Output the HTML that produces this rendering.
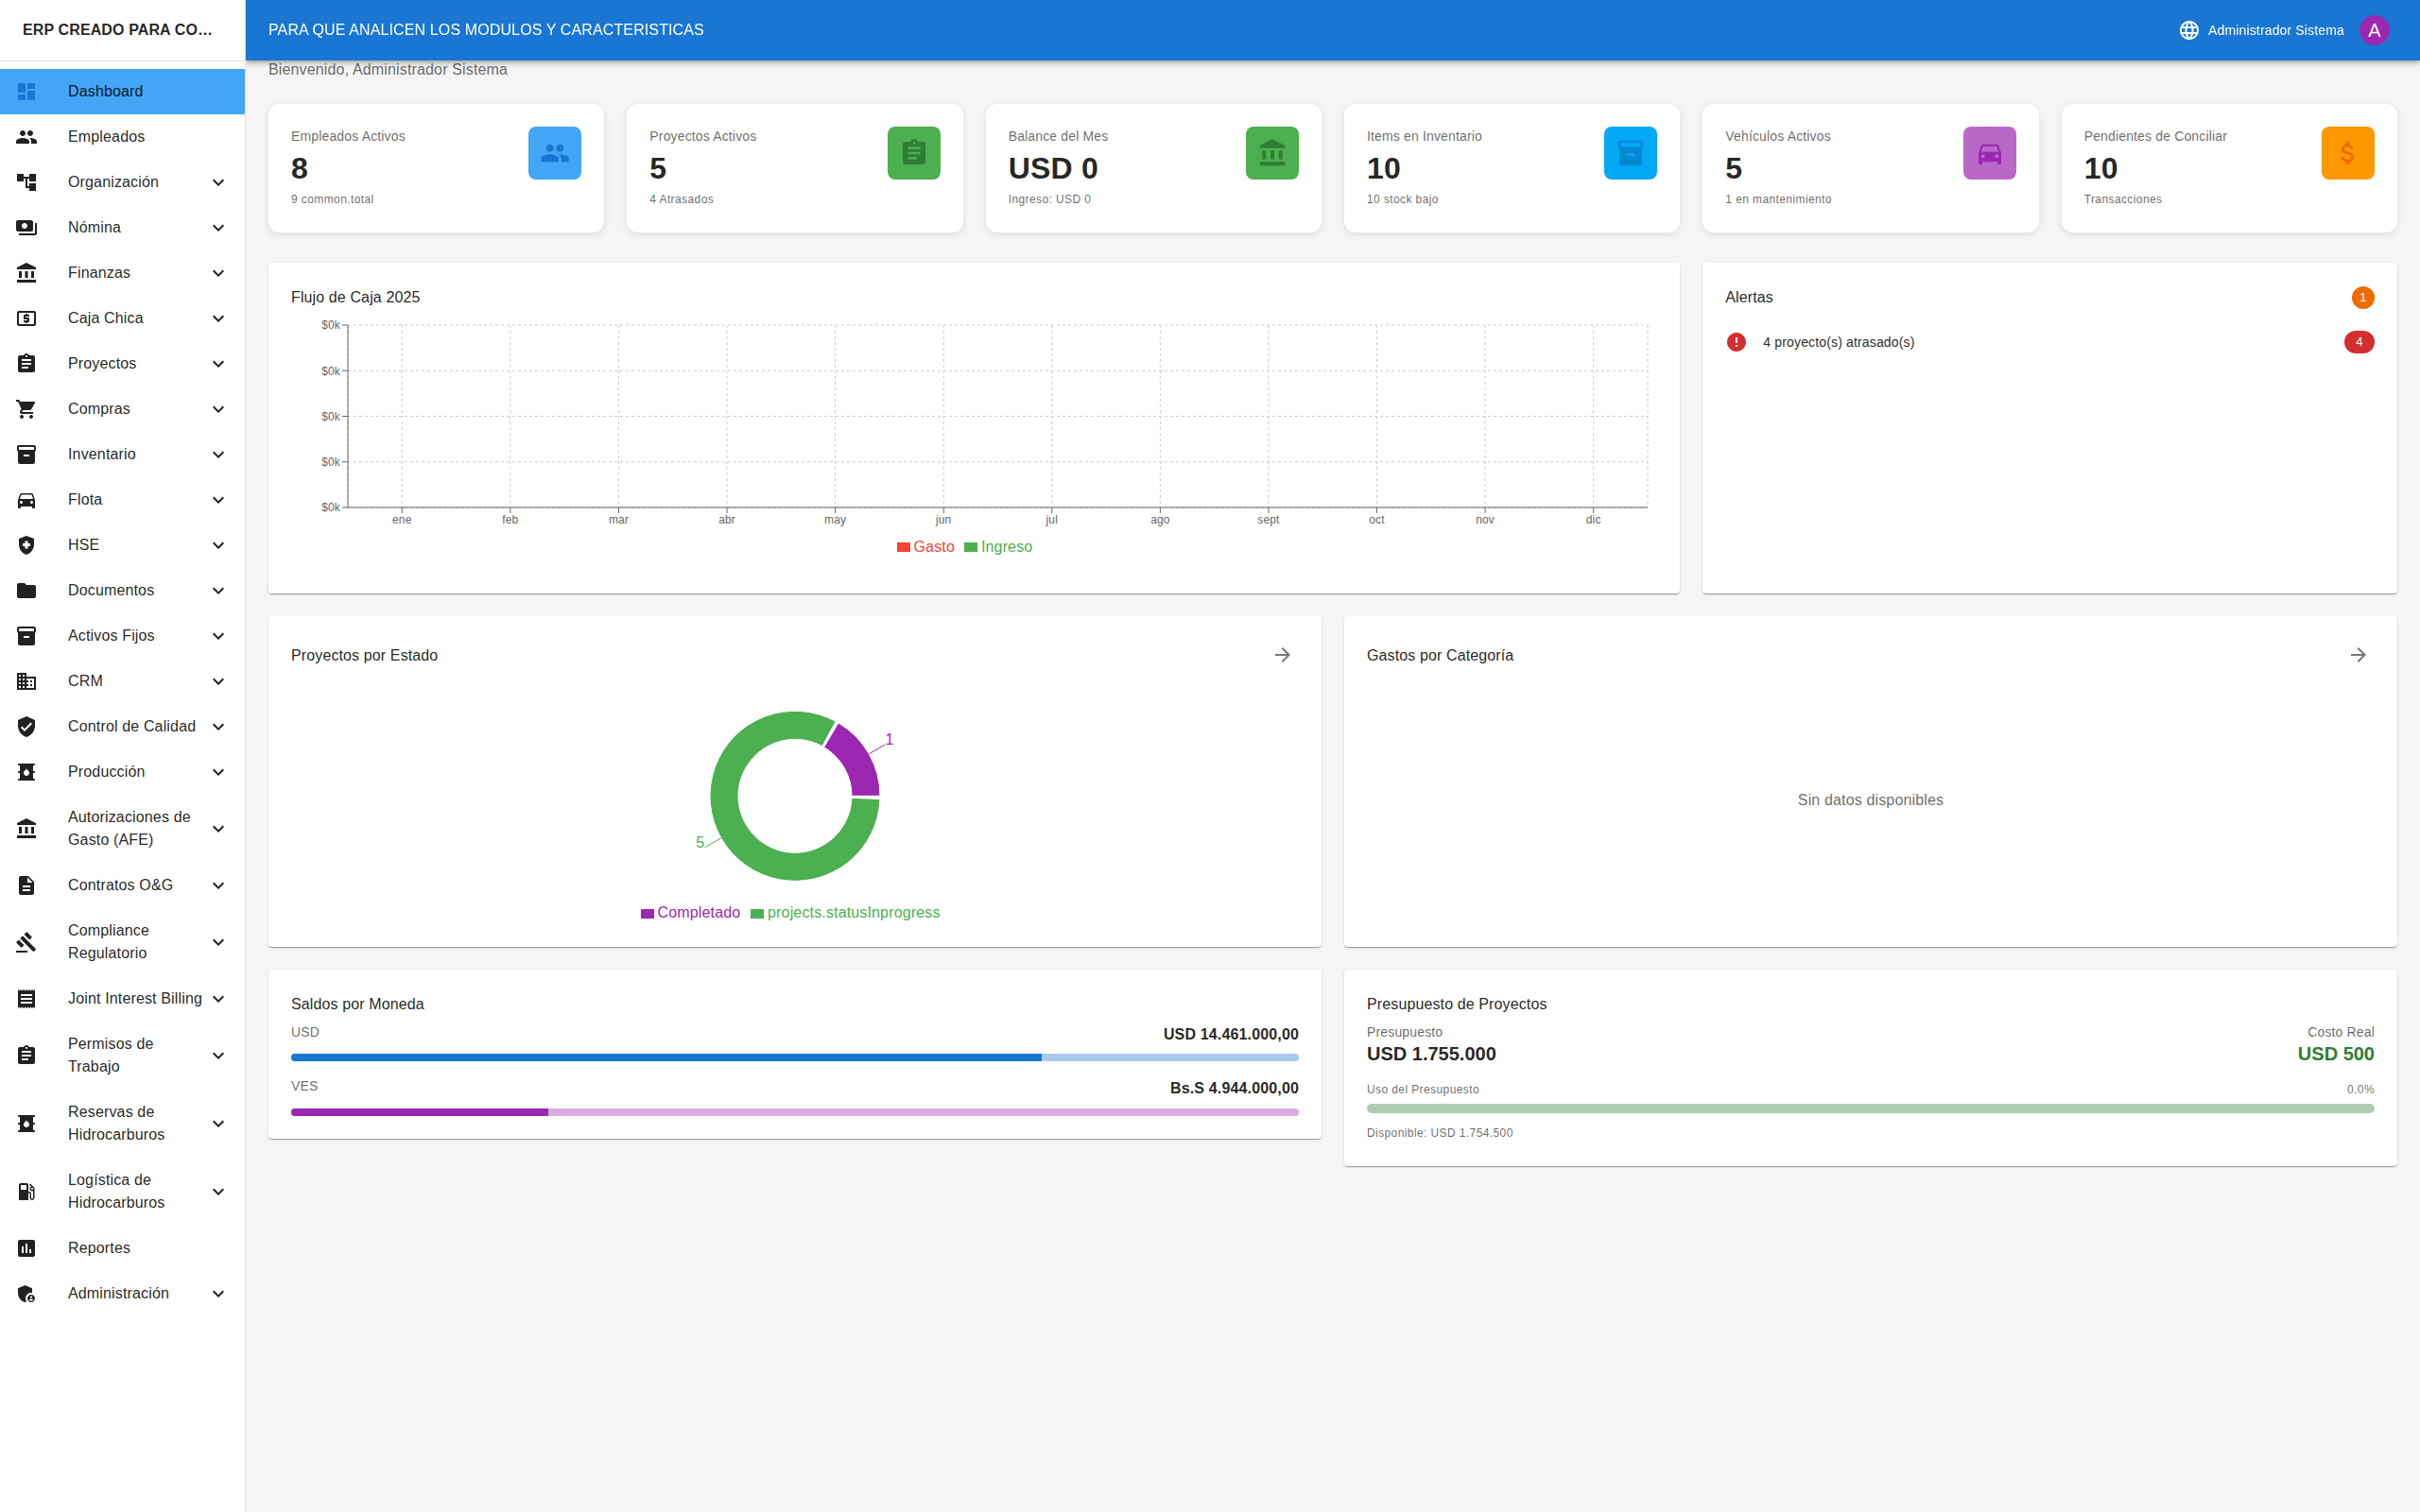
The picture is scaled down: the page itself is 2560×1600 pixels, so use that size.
<!DOCTYPE html>
<html lang="es">
<head>
<meta charset="utf-8">
<title>ERP Dashboard</title>
<style>
*{box-sizing:border-box}
html,body{margin:0;padding:0}
body{width:2560px;height:1600px;overflow:hidden;background:#f5f5f5;font-family:"Liberation Sans",sans-serif;color:rgba(0,0,0,.87);font-size:16px;line-height:1.5;letter-spacing:.00938em;-webkit-font-smoothing:antialiased}
svg{display:block}
/* sidebar */
#side{position:absolute;left:0;top:0;width:260px;height:1600px;background:#fff;border-right:1px solid rgba(0,0,0,.12);z-index:6}
#brand{height:64px;padding:0 24px;display:flex;align-items:center;font-weight:700;font-size:16px;letter-spacing:.0075em;white-space:nowrap}
#side hr{margin:0;border:0;border-top:1px solid rgba(0,0,0,.12)}
#nav{padding:8px 0;margin:0;list-style:none}
#nav li{display:flex;align-items:center;min-height:48px;padding:8px 16px;position:relative}
#nav li.two{min-height:72px}
#nav li.sel{background:#42a5f5}
#nav .ic{width:56px;flex:none;color:rgba(0,0,0,.87)}
#nav .ic svg{width:24px;height:24px;fill:currentColor}
#nav li.sel .ic{color:#1976d2}
#nav .tx{flex:1;font-size:16px;line-height:24px;letter-spacing:.00938em;color:rgba(0,0,0,.87)}
#nav .ch{width:24px;height:24px;flex:none;fill:rgba(0,0,0,.87)}
/* appbar */
#bar{will-change:transform;position:absolute;left:260px;top:0;width:2300px;height:64px;background:#1976d2;color:#fff;display:flex;align-items:center;padding:0 32px 0 24px;box-shadow:0 2px 4px -1px rgba(0,0,0,.2),0 4px 5px 0 rgba(0,0,0,.14),0 1px 10px 0 rgba(0,0,0,.12);z-index:5}
#bar .title{flex:1;font-size:16px;letter-spacing:.0075em;white-space:nowrap}
#bar .globe{width:24px;height:24px;fill:#fff;margin-right:8px}
#bar .user{font-size:14px;letter-spacing:.01071em;margin-right:16px}
#bar .av{width:32px;height:32px;border-radius:50%;background:#9c27b0;color:#fff;font-size:20px;display:flex;align-items:center;justify-content:center;letter-spacing:0}
/* main */
#main{position:absolute;left:0;top:0;width:2560px;height:1600px}
.abs{position:absolute}
.welcome{left:284px;top:62px;font-size:16px;line-height:24px;color:rgba(0,0,0,.6);white-space:nowrap}
/* stat cards */
.stat{position:absolute;top:110px;height:136px;background:#fff;border-radius:12px;box-shadow:0 2px 8px rgba(0,0,0,.1);padding:24px}
.st-l{font-size:14px;line-height:20px;letter-spacing:.01071em;color:rgba(0,0,0,.6);white-space:nowrap}
.st-v{font-size:32px;line-height:39.52px;font-weight:700;letter-spacing:.00735em;margin-top:5px;white-space:nowrap}
.st-c{font-size:12px;line-height:19.92px;letter-spacing:.03333em;color:rgba(0,0,0,.6);margin-top:3px;white-space:nowrap}
.st-i{position:absolute;right:24px;top:24px;width:56px;height:56px;border-radius:8px;display:flex;align-items:center;justify-content:center}
.st-i svg{fill:currentColor}
/* papers */
.paper{position:absolute;background:#fff;border-radius:4px;box-shadow:0 2px 1px -1px rgba(0,0,0,.2),0 1px 1px 0 rgba(0,0,0,.14),0 1px 3px 0 rgba(0,0,0,.12)}
.h6{position:absolute;left:24px;font-size:16px;line-height:25.6px;letter-spacing:.0075em;white-space:nowrap;color:rgba(0,0,0,.87)}
.arrow{position:absolute;right:29px;width:24px;height:24px;fill:rgba(0,0,0,.54)}
.chip{position:absolute;height:24px;border-radius:12px;color:#fff;font-size:13px;line-height:24px;text-align:center;letter-spacing:0}
.legend{position:absolute;display:flex;align-items:center;font-size:16px;line-height:24px;letter-spacing:.00938em;white-space:nowrap}
.legend i{display:inline-block;width:14px;height:10.5px;margin-right:3.5px}
.legend span{margin-right:10px}
.b2{font-size:14px;line-height:20px;letter-spacing:.01071em;color:rgba(0,0,0,.6);white-space:nowrap;position:absolute}
.cap{font-size:12px;line-height:19.92px;letter-spacing:.03333em;color:rgba(0,0,0,.6);white-space:nowrap;position:absolute}
.amt{font-size:16px;line-height:24px;font-weight:700;letter-spacing:.00938em;white-space:nowrap;position:absolute;right:24px}
.big{font-size:20px;line-height:32px;font-weight:700;letter-spacing:0;white-space:nowrap;position:absolute}
.prog{position:absolute;left:24px;right:24px;height:8px;border-radius:4px;overflow:hidden}
.prog b{display:block;height:100%}

</style>
</head>
<body>
<div id="side">
  <div id="brand">ERP CREADO PARA CO…</div>
  <hr>
  <ul id="nav">
<li class="sel"><span class="ic"><svg viewBox="0 0 24 24"><path d="M3 13h8V3H3v10zm0 8h8v-6H3v6zm10 0h8V11h-8v10zm0-18v6h8V3h-8z"/></svg></span><span class="tx">Dashboard</span></li>
<li><span class="ic"><svg viewBox="0 0 24 24"><path d="M16 11c1.66 0 2.99-1.34 2.99-3S17.66 5 16 5c-1.66 0-3 1.34-3 3s1.34 3 3 3zm-8 0c1.66 0 2.99-1.34 2.99-3S9.66 5 8 5C6.34 5 5 6.34 5 8s1.34 3 3 3zm0 2c-2.33 0-7 1.17-7 3.5V19h14v-2.5c0-2.33-4.67-3.5-7-3.5zm8 0c-.29 0-.62.02-.97.05 1.16.84 1.97 1.97 1.97 3.45V19h6v-2.5c0-2.33-4.67-3.5-7-3.5z"/></svg></span><span class="tx">Empleados</span></li>
<li><span class="ic"><svg viewBox="0 0 24 24"><path d="M22 11V3h-7v3H9V3H2v8h7V8h2v10h4v3h7v-8h-7v3h-2V8h2v3z"/></svg></span><span class="tx">Organización</span><svg class="ch" viewBox="0 0 24 24"><path d="M16.59 8.59L12 13.17 7.41 8.59 6 10l6 6 6-6z"/></svg></li>
<li><span class="ic"><svg viewBox="0 0 24 24"><path d="M19 14V6c0-1.1-.9-2-2-2H3c-1.1 0-2 .9-2 2v8c0 1.1.9 2 2 2h14c1.1 0 2-.9 2-2zm-9-1c-1.66 0-3-1.34-3-3s1.34-3 3-3 3 1.34 3 3-1.34 3-3 3zm13-6v11c0 1.1-.9 2-2 2H4v-2h17V7h2z"/></svg></span><span class="tx">Nómina</span><svg class="ch" viewBox="0 0 24 24"><path d="M16.59 8.59L12 13.17 7.41 8.59 6 10l6 6 6-6z"/></svg></li>
<li><span class="ic"><svg viewBox="0 0 24 24"><path d="M4 10h3v7H4zM10.5 10h3v7h-3zM2 19h20v3H2zM17 10h3v7h-3zM12 1L2 6v2h20V6z"/></svg></span><span class="tx">Finanzas</span><svg class="ch" viewBox="0 0 24 24"><path d="M16.59 8.59L12 13.17 7.41 8.59 6 10l6 6 6-6z"/></svg></li>
<li><span class="ic"><svg viewBox="0 0 24 24"><path d="M11 17h2v-1h1c.55 0 1-.45 1-1v-3c0-.55-.45-1-1-1h-3v-1h4V8h-2V7h-2v1h-1c-.55 0-1 .45-1 1v3c0 .55.45 1 1 1h3v1H9v2h2v1zm9-13H4c-1.11 0-1.99.89-1.99 2L2 18c0 1.11.89 2 2 2h16c1.11 0 2-.89 2-2V6c0-1.11-.89-2-2-2zm0 14H4V6h16v12z"/></svg></span><span class="tx">Caja Chica</span><svg class="ch" viewBox="0 0 24 24"><path d="M16.59 8.59L12 13.17 7.41 8.59 6 10l6 6 6-6z"/></svg></li>
<li><span class="ic"><svg viewBox="0 0 24 24"><path d="M19 3h-4.18C14.4 1.84 13.3 1 12 1c-1.3 0-2.4.84-2.82 2H5c-1.1 0-2 .9-2 2v14c0 1.1.9 2 2 2h14c1.1 0 2-.9 2-2V5c0-1.1-.9-2-2-2zm-7 0c.55 0 1 .45 1 1s-.45 1-1 1-1-.45-1-1 .45-1 1-1zm2 14H7v-2h7v2zm3-4H7v-2h10v2zm0-4H7V7h10v2z"/></svg></span><span class="tx">Proyectos</span><svg class="ch" viewBox="0 0 24 24"><path d="M16.59 8.59L12 13.17 7.41 8.59 6 10l6 6 6-6z"/></svg></li>
<li><span class="ic"><svg viewBox="0 0 24 24"><path d="M7 18c-1.1 0-1.99.9-1.99 2S5.9 22 7 22s2-.9 2-2-.9-2-2-2zM1 2v2h2l3.6 7.59-1.35 2.45c-.16.28-.25.61-.25.96 0 1.1.9 2 2 2h12v-2H7.42c-.14 0-.25-.11-.25-.25l.03-.12.9-1.63h7.45c.75 0 1.41-.41 1.75-1.03l3.58-6.49c.08-.14.12-.31.12-.48 0-.55-.45-1-1-1H5.21l-.94-2H1zm16 16c-1.1 0-1.99.9-1.99 2s.89 2 1.99 2 2-.9 2-2-.9-2-2-2z"/></svg></span><span class="tx">Compras</span><svg class="ch" viewBox="0 0 24 24"><path d="M16.59 8.59L12 13.17 7.41 8.59 6 10l6 6 6-6z"/></svg></li>
<li><span class="ic"><svg viewBox="0 0 24 24"><path d="M20 2H4c-1 0-2 .9-2 2v3.01c0 .72.43 1.34 1 1.69V20c0 1.1 1.1 2 2 2h14c.9 0 2-.9 2-2V8.7c.57-.35 1-.97 1-1.69V4c0-1.1-1-2-2-2zm-5 12H9v-2h6v2zm5-7H4V4h16v3z"/></svg></span><span class="tx">Inventario</span><svg class="ch" viewBox="0 0 24 24"><path d="M16.59 8.59L12 13.17 7.41 8.59 6 10l6 6 6-6z"/></svg></li>
<li><span class="ic"><svg viewBox="0 0 24 24"><path d="M18.92 6.01C18.72 5.42 18.16 5 17.5 5h-11c-.66 0-1.21.42-1.42 1.01L3 12v8c0 .55.45 1 1 1h1c.55 0 1-.45 1-1v-1h12v1c0 .55.45 1 1 1h1c.55 0 1-.45 1-1v-8l-2.08-5.99zM6.5 16c-.83 0-1.5-.67-1.5-1.5S5.67 13 6.5 13s1.5.67 1.5 1.5S7.33 16 6.5 16zm11 0c-.83 0-1.5-.67-1.5-1.5s.67-1.5 1.5-1.5 1.5.67 1.5 1.5-.67 1.5-1.5 1.5zM5 11l1.5-4.5h11L19 11H5z"/></svg></span><span class="tx">Flota</span><svg class="ch" viewBox="0 0 24 24"><path d="M16.59 8.59L12 13.17 7.41 8.59 6 10l6 6 6-6z"/></svg></li>
<li><span class="ic"><svg viewBox="0 0 24 24"><path d="M10.5 13H8v-3h2.5V7.5h3V10H16v3h-2.5v2.5h-3V13zM12 2 4 5v6.09c0 5.05 3.41 9.76 8 10.91 4.59-1.15 8-5.86 8-10.91V5l-8-3z"/></svg></span><span class="tx">HSE</span><svg class="ch" viewBox="0 0 24 24"><path d="M16.59 8.59L12 13.17 7.41 8.59 6 10l6 6 6-6z"/></svg></li>
<li><span class="ic"><svg viewBox="0 0 24 24"><path d="M10 4H4c-1.1 0-1.99.9-1.99 2L2 18c0 1.1.9 2 2 2h16c1.1 0 2-.9 2-2V8c0-1.1-.9-2-2-2h-8l-2-2z"/></svg></span><span class="tx">Documentos</span><svg class="ch" viewBox="0 0 24 24"><path d="M16.59 8.59L12 13.17 7.41 8.59 6 10l6 6 6-6z"/></svg></li>
<li><span class="ic"><svg viewBox="0 0 24 24"><path d="M20 2H4c-1 0-2 .9-2 2v3.01c0 .72.43 1.34 1 1.69V20c0 1.1 1.1 2 2 2h14c.9 0 2-.9 2-2V8.7c.57-.35 1-.97 1-1.69V4c0-1.1-1-2-2-2zm-5 12H9v-2h6v2zm5-7H4V4h16v3z"/></svg></span><span class="tx">Activos Fijos</span><svg class="ch" viewBox="0 0 24 24"><path d="M16.59 8.59L12 13.17 7.41 8.59 6 10l6 6 6-6z"/></svg></li>
<li><span class="ic"><svg viewBox="0 0 24 24"><path d="M12 7V3H2v18h20V7H12zM6 19H4v-2h2v2zm0-4H4v-2h2v2zm0-4H4V9h2v2zm0-4H4V5h2v2zm4 12H8v-2h2v2zm0-4H8v-2h2v2zm0-4H8V9h2v2zm0-4H8V5h2v2zm10 12h-8v-2h2v-2h-2v-2h2v-2h-2V9h8v10zm-2-8h-2v2h2v-2zm0 4h-2v2h2v-2z"/></svg></span><span class="tx">CRM</span><svg class="ch" viewBox="0 0 24 24"><path d="M16.59 8.59L12 13.17 7.41 8.59 6 10l6 6 6-6z"/></svg></li>
<li><span class="ic"><svg viewBox="0 0 24 24"><path d="M12 1L3 5v6c0 5.55 3.84 10.74 9 12 5.16-1.26 9-6.45 9-12V5l-9-4zm-2 16l-4-4 1.41-1.41L10 14.17l6.59-6.59L18 9l-8 8z"/></svg></span><span class="tx">Control de Calidad</span><svg class="ch" viewBox="0 0 24 24"><path d="M16.59 8.59L12 13.17 7.41 8.59 6 10l6 6 6-6z"/></svg></li>
<li><span class="ic"><svg viewBox="0 0 24 24"><path d="M20 13c.55 0 1-.45 1-1s-.45-1-1-1h-1V5h1c.55 0 1-.45 1-1s-.45-1-1-1H4c-.55 0-1 .45-1 1s.45 1 1 1h1v6H4c-.55 0-1 .45-1 1s.45 1 1 1h1v6H4c-.55 0-1 .45-1 1s.45 1 1 1h16c.55 0 1-.45 1-1s-.45-1-1-1h-1v-6h1zm-8 3c-1.66 0-3-1.32-3-2.95 0-1.3.52-1.67 3-4.55 2.47 2.86 3 3.24 3 4.55 0 1.63-1.34 2.95-3 2.95z"/></svg></span><span class="tx">Producción</span><svg class="ch" viewBox="0 0 24 24"><path d="M16.59 8.59L12 13.17 7.41 8.59 6 10l6 6 6-6z"/></svg></li>
<li class="two"><span class="ic"><svg viewBox="0 0 24 24"><path d="M4 10h3v7H4zM10.5 10h3v7h-3zM2 19h20v3H2zM17 10h3v7h-3zM12 1L2 6v2h20V6z"/></svg></span><span class="tx">Autorizaciones de<br>Gasto (AFE)</span><svg class="ch" viewBox="0 0 24 24"><path d="M16.59 8.59L12 13.17 7.41 8.59 6 10l6 6 6-6z"/></svg></li>
<li><span class="ic"><svg viewBox="0 0 24 24"><path d="M14 2H6c-1.1 0-1.99.9-1.99 2L4 20c0 1.1.89 2 1.99 2H18c1.1 0 2-.9 2-2V8l-6-6zm2 16H8v-2h8v2zm0-4H8v-2h8v2zm-3-5V3.5L18.5 9H13z"/></svg></span><span class="tx">Contratos O&amp;G</span><svg class="ch" viewBox="0 0 24 24"><path d="M16.59 8.59L12 13.17 7.41 8.59 6 10l6 6 6-6z"/></svg></li>
<li class="two"><span class="ic"><svg viewBox="0 0 24 24"><path d="M1 21h12v2H1zM5.245 8.07l2.83-2.827 14.14 14.142-2.828 2.827zM12.317 1l5.657 5.656-2.83 2.83-5.654-5.66zM3.825 9.485l5.657 5.657-2.828 2.828-5.657-5.657z"/></svg></span><span class="tx">Compliance<br>Regulatorio</span><svg class="ch" viewBox="0 0 24 24"><path d="M16.59 8.59L12 13.17 7.41 8.59 6 10l6 6 6-6z"/></svg></li>
<li><span class="ic"><svg viewBox="0 0 24 24"><path d="M18 17H6v-2h12v2zm0-4H6v-2h12v2zm0-4H6V7h12v2zM3 22l1.5-1.5L6 22l1.5-1.5L9 22l1.5-1.5L12 22l1.5-1.5L15 22l1.5-1.5L18 22l1.5-1.5L21 22V2l-1.5 1.5L18 2l-1.5 1.5L15 2l-1.5 1.5L12 2l-1.5 1.5L9 2 7.5 3.5 6 2 4.5 3.5 3 2v20z"/></svg></span><span class="tx">Joint Interest Billing</span><svg class="ch" viewBox="0 0 24 24"><path d="M16.59 8.59L12 13.17 7.41 8.59 6 10l6 6 6-6z"/></svg></li>
<li class="two"><span class="ic"><svg viewBox="0 0 24 24"><path d="M19 3h-4.18C14.4 1.84 13.3 1 12 1c-1.3 0-2.4.84-2.82 2H5c-1.1 0-2 .9-2 2v14c0 1.1.9 2 2 2h14c1.1 0 2-.9 2-2V5c0-1.1-.9-2-2-2zm-7 0c.55 0 1 .45 1 1s-.45 1-1 1-1-.45-1-1 .45-1 1-1zm2 14H7v-2h7v2zm3-4H7v-2h10v2zm0-4H7V7h10v2z"/></svg></span><span class="tx">Permisos de<br>Trabajo</span><svg class="ch" viewBox="0 0 24 24"><path d="M16.59 8.59L12 13.17 7.41 8.59 6 10l6 6 6-6z"/></svg></li>
<li class="two"><span class="ic"><svg viewBox="0 0 24 24"><path d="M20 13c.55 0 1-.45 1-1s-.45-1-1-1h-1V5h1c.55 0 1-.45 1-1s-.45-1-1-1H4c-.55 0-1 .45-1 1s.45 1 1 1h1v6H4c-.55 0-1 .45-1 1s.45 1 1 1h1v6H4c-.55 0-1 .45-1 1s.45 1 1 1h16c.55 0 1-.45 1-1s-.45-1-1-1h-1v-6h1zm-8 3c-1.66 0-3-1.32-3-2.95 0-1.3.52-1.67 3-4.55 2.47 2.86 3 3.24 3 4.55 0 1.63-1.34 2.95-3 2.95z"/></svg></span><span class="tx">Reservas de<br>Hidrocarburos</span><svg class="ch" viewBox="0 0 24 24"><path d="M16.59 8.59L12 13.17 7.41 8.59 6 10l6 6 6-6z"/></svg></li>
<li class="two"><span class="ic"><svg viewBox="0 0 24 24"><path d="M19.77 7.23l.01-.01-3.72-3.72L15 4.56l2.11 2.11c-.94.36-1.61 1.26-1.61 2.33 0 1.38 1.12 2.5 2.5 2.5.36 0 .69-.08 1-.21v7.21c0 .55-.45 1-1 1s-1-.45-1-1V14c0-1.1-.9-2-2-2h-1V5c0-1.1-.9-2-2-2H6c-1.1 0-2 .9-2 2v16h10v-7.5h1.5v5c0 1.38 1.12 2.5 2.5 2.5s2.5-1.12 2.5-2.5V9c0-.69-.28-1.32-.73-1.77zM12 10H6V5h6v5zm6 0c-.55 0-1-.45-1-1s.45-1 1-1 1 .45 1 1-.45 1-1 1z"/></svg></span><span class="tx">Logística de<br>Hidrocarburos</span><svg class="ch" viewBox="0 0 24 24"><path d="M16.59 8.59L12 13.17 7.41 8.59 6 10l6 6 6-6z"/></svg></li>
<li><span class="ic"><svg viewBox="0 0 24 24"><path d="M19 3H5c-1.1 0-2 .9-2 2v14c0 1.1.9 2 2 2h14c1.1 0 2-.9 2-2V5c0-1.1-.9-2-2-2zM9 17H7v-7h2v7zm4 0h-2V7h2v10zm4 0h-2v-4h2v4z"/></svg></span><span class="tx">Reportes</span></li>
<li><span class="ic"><svg viewBox="0 0 24 24"><path d="M17 11c.34 0 .67.04 1 .09V6.27L10.5 3 3 6.27v4.91c0 4.54 3.2 8.79 7.5 9.82.55-.13 1.08-.32 1.6-.55-.69-.98-1.1-2.17-1.1-3.45 0-3.31 2.69-6 6-6zM17 13c-2.21 0-4 1.79-4 4s1.79 4 4 4 4-1.79 4-4-1.79-4-4-4zm0 1.38c.62 0 1.12.51 1.12 1.12s-.51 1.120-1.12 1.120-1.120-.51-1.120-1.120.5-1.120 1.120-1.120zm0 5.370c-.93 0-1.740-.46-2.240-1.170.05-.72 1.510-1.080 2.240-1.080s2.190.36 2.240 1.080c-.5.71-1.310 1.170-2.240 1.170z"/></svg></span><span class="tx">Administración</span><svg class="ch" viewBox="0 0 24 24"><path d="M16.59 8.59L12 13.17 7.41 8.59 6 10l6 6 6-6z"/></svg></li>
</ul>
</div>
<div id="bar">
  <div class="title">PARA QUE ANALICEN LOS MODULOS Y CARACTERISTICAS</div>
  <svg class="globe" viewBox="0 0 24 24"><path d="M11.99 2C6.47 2 2 6.48 2 12s4.47 10 9.99 10C17.52 22 22 17.52 22 12S17.52 2 11.99 2zm6.93 6h-2.95c-.32-1.25-.78-2.45-1.38-3.56 1.840.63 3.370 1.910 4.330 3.560zM12 4.040c.83 1.200 1.480 2.530 1.910 3.960h-3.820c.43-1.430 1.080-2.760 1.910-3.960zM4.260 14C4.100 13.360 4 12.690 4 12s.1-1.360.26-2h3.380c-.08.66-.14 1.320-.14 2 0 .68.06 1.340.14 2H4.260zm.82 2h2.950c.32 1.250.78 2.450 1.380 3.560-1.840-.63-3.370-1.900-4.330-3.560zm2.950-8H5.080c.96-1.660 2.490-2.930 4.330-3.560C8.810 5.550 8.350 6.750 8.030 8zM12 19.960c-.83-1.200-1.480-2.530-1.910-3.960h3.820c-.43 1.430-1.080 2.760-1.910 3.960zM14.340 14H9.660c-.09-.66-.16-1.320-.16-2 0-.68.07-1.350.16-2h4.680c.09.65.16 1.320.16 2 0 .68-.07 1.340-.16 2zm.25 5.560c.6-1.110 1.060-2.310 1.380-3.560h2.950c-.96 1.650-2.490 2.930-4.330 3.560zM16.360 14c.08-.66.14-1.320.14-2 0-.68-.06-1.340-.14-2h3.380c.16.64.26 1.310.26 2s-.1 1.360-.26 2h-3.380z"/></svg>
  <div class="user">Administrador Sistema</div>
  <div class="av">A</div>
</div>
<div id="main">
<div class="abs welcome">Bienvenido, Administrador Sistema</div>
<div class="stat" style="left:284.00px;width:355.33px">
  <div class="st-l">Empleados Activos</div><div class="st-v">8</div><div class="st-c">9 common.total</div>
  <div class="st-i" style="background:#42a5f5;color:#1976d2"><svg width="32" height="32" viewBox="0 0 24 24"><path d="M16 11c1.66 0 2.99-1.34 2.99-3S17.66 5 16 5c-1.66 0-3 1.34-3 3s1.34 3 3 3zm-8 0c1.66 0 2.99-1.34 2.99-3S9.66 5 8 5C6.34 5 5 6.34 5 8s1.34 3 3 3zm0 2c-2.33 0-7 1.17-7 3.5V19h14v-2.5c0-2.33-4.67-3.5-7-3.5zm8 0c-.29 0-.62.02-.97.05 1.16.84 1.97 1.97 1.97 3.45V19h6v-2.5c0-2.33-4.67-3.5-7-3.5z"/></svg></div>
</div>
<div class="stat" style="left:663.33px;width:355.33px">
  <div class="st-l">Proyectos Activos</div><div class="st-v">5</div><div class="st-c">4 Atrasados</div>
  <div class="st-i" style="background:#4caf50;color:#2e7d32"><svg width="32" height="32" viewBox="0 0 24 24"><path d="M19 3h-4.18C14.4 1.84 13.3 1 12 1c-1.3 0-2.4.84-2.82 2H5c-1.1 0-2 .9-2 2v14c0 1.1.9 2 2 2h14c1.1 0 2-.9 2-2V5c0-1.1-.9-2-2-2zm-7 0c.55 0 1 .45 1 1s-.45 1-1 1-1-.45-1-1 .45-1 1-1zm2 14H7v-2h7v2zm3-4H7v-2h10v2zm0-4H7V7h10v2z"/></svg></div>
</div>
<div class="stat" style="left:1042.67px;width:355.33px">
  <div class="st-l">Balance del Mes</div><div class="st-v">USD 0</div><div class="st-c">Ingreso: USD 0</div>
  <div class="st-i" style="background:#4caf50;color:#2e7d32"><svg width="32" height="32" viewBox="0 0 24 24"><path d="M4 10h3v7H4zM10.5 10h3v7h-3zM2 19h20v3H2zM17 10h3v7h-3zM12 1L2 6v2h20V6z"/></svg></div>
</div>
<div class="stat" style="left:1422.00px;width:355.33px">
  <div class="st-l">Items en Inventario</div><div class="st-v">10</div><div class="st-c">10 stock bajo</div>
  <div class="st-i" style="background:#03a9f4;color:#0288d1"><svg width="32" height="32" viewBox="0 0 24 24"><path d="M20 2H4c-1 0-2 .9-2 2v3.01c0 .72.43 1.34 1 1.69V20c0 1.1 1.1 2 2 2h14c.9 0 2-.9 2-2V8.7c.57-.35 1-.97 1-1.69V4c0-1.1-1-2-2-2zm-5 12H9v-2h6v2zm5-7H4V4h16v3z"/></svg></div>
</div>
<div class="stat" style="left:1801.33px;width:355.33px">
  <div class="st-l">Vehículos Activos</div><div class="st-v">5</div><div class="st-c">1 en mantenimiento</div>
  <div class="st-i" style="background:#ba68c8;color:#9c27b0"><svg width="32" height="32" viewBox="0 0 24 24"><path d="M18.92 6.01C18.72 5.42 18.16 5 17.5 5h-11c-.66 0-1.21.42-1.42 1.01L3 12v8c0 .55.45 1 1 1h1c.55 0 1-.45 1-1v-1h12v1c0 .55.45 1 1 1h1c.55 0 1-.45 1-1v-8l-2.08-5.99zM6.5 16c-.83 0-1.5-.67-1.5-1.5S5.67 13 6.5 13s1.5.67 1.5 1.5S7.33 16 6.5 16zm11 0c-.83 0-1.5-.67-1.5-1.5s.67-1.5 1.5-1.5 1.5.67 1.5 1.5-.67 1.5-1.5 1.5zM5 11l1.5-4.5h11L19 11H5z"/></svg></div>
</div>
<div class="stat" style="left:2180.67px;width:355.33px">
  <div class="st-l">Pendientes de Conciliar</div><div class="st-v">10</div><div class="st-c">Transacciones</div>
  <div class="st-i" style="background:#ff9800;color:#ed6c02"><svg width="32" height="32" viewBox="0 0 24 24"><path d="M11.8 10.9c-2.27-.59-3-1.2-3-2.15 0-1.09 1.01-1.85 2.7-1.85 1.78 0 2.44.85 2.5 2.1h2.210c-.07-1.720-1.120-3.300-3.210-3.810V3h-3v2.160c-1.940.42-3.500 1.680-3.500 3.610 0 2.310 1.910 3.460 4.700 4.130 2.500.6 3 1.480 3 2.410 0 .69-.49 1.790-2.700 1.790-2.060 0-2.870-.92-2.980-2.100h-2.200c.12 2.190 1.760 3.420 3.680 3.830V21h3v-2.150c1.950-.37 3.500-1.500 3.500-3.550 0-2.840-2.430-3.810-4.700-4.400z"/></svg></div>
</div>

<!-- cash flow -->
<div class="paper" style="left:284px;top:278px;width:1493.33px;height:350px">
  <div class="h6" style="top:24px">Flujo de Caja 2025</div>
</div>
<svg class="abs" style="left:308px;top:334px" width="1446" height="270" viewBox="0 0 1446 270" font-family="Liberation Sans, sans-serif">
<g stroke="#ccc" stroke-dasharray="3 3" fill="none">
<line x1="60.00" y1="10.00" x2="1435.00" y2="10.00"/>
<line x1="60.00" y1="58.25" x2="1435.00" y2="58.25"/>
<line x1="60.00" y1="106.50" x2="1435.00" y2="106.50"/>
<line x1="60.00" y1="154.75" x2="1435.00" y2="154.75"/>
<line x1="60.00" y1="203.00" x2="1435.00" y2="203.00"/>
<line x1="60.00" y1="10" x2="60.00" y2="203"/>
<line x1="117.29" y1="10" x2="117.29" y2="203"/>
<line x1="231.88" y1="10" x2="231.88" y2="203"/>
<line x1="346.46" y1="10" x2="346.46" y2="203"/>
<line x1="461.04" y1="10" x2="461.04" y2="203"/>
<line x1="575.62" y1="10" x2="575.62" y2="203"/>
<line x1="690.21" y1="10" x2="690.21" y2="203"/>
<line x1="804.79" y1="10" x2="804.79" y2="203"/>
<line x1="919.38" y1="10" x2="919.38" y2="203"/>
<line x1="1033.96" y1="10" x2="1033.96" y2="203"/>
<line x1="1148.54" y1="10" x2="1148.54" y2="203"/>
<line x1="1263.12" y1="10" x2="1263.12" y2="203"/>
<line x1="1377.71" y1="10" x2="1377.71" y2="203"/>
<line x1="1435.00" y1="10" x2="1435.00" y2="203"/>
</g>
<g stroke="#666" fill="none">
<line x1="60.00" y1="203" x2="1435.00" y2="203"/>
<line x1="60.00" y1="10" x2="60.00" y2="203"/>
<line x1="117.29" y1="203" x2="117.29" y2="209"/>
<line x1="231.88" y1="203" x2="231.88" y2="209"/>
<line x1="346.46" y1="203" x2="346.46" y2="209"/>
<line x1="461.04" y1="203" x2="461.04" y2="209"/>
<line x1="575.62" y1="203" x2="575.62" y2="209"/>
<line x1="690.21" y1="203" x2="690.21" y2="209"/>
<line x1="804.79" y1="203" x2="804.79" y2="209"/>
<line x1="919.38" y1="203" x2="919.38" y2="209"/>
<line x1="1033.96" y1="203" x2="1033.96" y2="209"/>
<line x1="1148.54" y1="203" x2="1148.54" y2="209"/>
<line x1="1263.12" y1="203" x2="1263.12" y2="209"/>
<line x1="1377.71" y1="203" x2="1377.71" y2="209"/>
<line x1="54.00" y1="10.00" x2="60.00" y2="10.00"/>
<line x1="54.00" y1="58.25" x2="60.00" y2="58.25"/>
<line x1="54.00" y1="106.50" x2="60.00" y2="106.50"/>
<line x1="54.00" y1="154.75" x2="60.00" y2="154.75"/>
<line x1="54.00" y1="203.00" x2="60.00" y2="203.00"/>
</g>
<g fill="#666" font-size="12" letter-spacing="0.15">
<text x="117.29" y="211" dy="0.71em" text-anchor="middle">ene</text>
<text x="231.88" y="211" dy="0.71em" text-anchor="middle">feb</text>
<text x="346.46" y="211" dy="0.71em" text-anchor="middle">mar</text>
<text x="461.04" y="211" dy="0.71em" text-anchor="middle">abr</text>
<text x="575.62" y="211" dy="0.71em" text-anchor="middle">may</text>
<text x="690.21" y="211" dy="0.71em" text-anchor="middle">jun</text>
<text x="804.79" y="211" dy="0.71em" text-anchor="middle">jul</text>
<text x="919.38" y="211" dy="0.71em" text-anchor="middle">ago</text>
<text x="1033.96" y="211" dy="0.71em" text-anchor="middle">sept</text>
<text x="1148.54" y="211" dy="0.71em" text-anchor="middle">oct</text>
<text x="1263.12" y="211" dy="0.71em" text-anchor="middle">nov</text>
<text x="1377.71" y="211" dy="0.71em" text-anchor="middle">dic</text>
<text x="52.00" y="10.00" dy="0.355em" text-anchor="end">$0k</text>
<text x="52.00" y="58.25" dy="0.355em" text-anchor="end">$0k</text>
<text x="52.00" y="106.50" dy="0.355em" text-anchor="end">$0k</text>
<text x="52.00" y="154.75" dy="0.355em" text-anchor="end">$0k</text>
<text x="52.00" y="203.00" dy="0.355em" text-anchor="end">$0k</text>
</g>
</svg>
<div class="legend" style="left:949px;top:567px"><i style="background:#f44336"></i><span style="color:#f44336">Gasto</span><i style="background:#4caf50;margin-right:4px"></i><span style="color:#4caf50;margin-right:0">Ingreso</span></div>
<!-- alerts -->
<div class="paper" style="left:1801.33px;top:278px;width:734.67px;height:350px">
  <div class="h6" style="top:24px">Alertas</div>
  <div class="chip" style="right:24px;top:25px;width:24px;background:#ed6c02">1</div>
  <svg class="abs" style="left:24px;top:72px;fill:#d32f2f" width="24" height="24" viewBox="0 0 24 24"><path d="M12 2C6.48 2 2 6.48 2 12s4.48 10 10 10 10-4.48 10-10S17.52 2 12 2zm1 15h-2v-2h2v2zm0-4h-2V7h2v6z"/></svg>
  <div class="abs" style="left:64px;top:74px;font-size:14px;line-height:20px;letter-spacing:.01071em;white-space:nowrap">4 proyecto(s) atrasado(s)</div>
  <div class="chip" style="right:24px;top:72px;width:32px;background:#d32f2f">4</div>
</div>
<!-- projects by status -->
<div class="paper" style="left:284px;top:652px;width:1114px;height:350px">
  <div class="h6" style="top:29px">Proyectos por Estado</div>
  <svg class="arrow" style="top:29px" viewBox="0 0 24 24"><path d="M12 4l-1.41 1.41L16.17 11H4v2h12.170l-5.580 5.590L12 20l8-8z"/></svg>
</div>
<svg class="abs" style="left:308px;top:710px" width="1066" height="270" viewBox="0 0 1066 270" font-family="Liberation Sans, sans-serif" font-size="16" letter-spacing="0.15">
<path d="M623.000,132.300A90,90,0,0,0,578.904,54.887L563.603,80.691A60,60,0,0,1,593.000,132.300Z" fill="#9c27b0" stroke="#fff"/>
<path d="M576.174,53.332A90,90,0,1,0,622.945,135.441L592.963,134.394A60,60,0,1,1,561.783,79.654Z" fill="#4caf50" stroke="#fff"/>
<path d="M611.203,87.754L628.581,77.855" stroke="#9c27b0" fill="none"/>
<text x="628.581" y="77.855" fill="#9c27b0" text-anchor="start">1</text>
<path d="M454.797,176.846L437.419,186.745" stroke="#4caf50" fill="none"/>
<text x="437.419" y="186.745" fill="#4caf50" text-anchor="end">5</text>
</svg>
<div class="legend" style="left:678px;top:955px"><i style="background:#9c27b0"></i><span style="color:#9c27b0;position:relative;top:-1px;margin-right:10.9px">Completado</span><i style="background:#4caf50;margin-right:3.9px"></i><span style="color:#4caf50;margin-right:0;position:relative;top:-1px">projects.statusInprogress</span></div>
<!-- expenses by category -->
<div class="paper" style="left:1422px;top:652px;width:1114px;height:350px">
  <div class="h6" style="top:29px">Gastos por Categoría</div>
  <svg class="arrow" style="top:29px" viewBox="0 0 24 24"><path d="M12 4l-1.41 1.41L16.17 11H4v2h12.170l-5.580 5.590L12 20l8-8z"/></svg>
  <div class="abs" style="left:0;right:0;top:183px;text-align:center;font-size:16px;line-height:24px;color:rgba(0,0,0,.6)">Sin datos disponibles</div>
</div>
<!-- balances -->
<div class="paper" style="left:284px;top:1026px;width:1114px;height:179px">
  <div class="h6" style="top:24px">Saldos por Moneda</div>
  <div class="b2" style="left:24px;top:56px">USD</div>
  <div class="amt" style="top:57px">USD 14.461.000,00</div>
  <div class="prog" style="top:89px;background:#a7caed"><b style="width:74.52%;background:#1976d2"></b></div>
  <div class="b2" style="left:24px;top:113px">VES</div>
  <div class="amt" style="top:114px">Bs.S 4.944.000,00</div>
  <div class="prog" style="top:147px;background:#d9ace0"><b style="width:25.48%;background:#9c27b0"></b></div>
</div>
<!-- budget -->
<div class="paper" style="left:1422px;top:1026px;width:1114px;height:208px">
  <div class="h6" style="top:24px">Presupuesto de Proyectos</div>
  <div class="b2" style="left:24px;top:56px">Presupuesto</div>
  <div class="b2" style="right:24px;top:56px">Costo Real</div>
  <div class="big" style="left:24px;top:73px">USD 1.755.000</div>
  <div class="big" style="right:24px;top:73px;color:#2e7d32">USD 500</div>
  <div class="cap" style="left:24px;top:118px">Uso del Presupuesto</div>
  <div class="cap" style="right:24px;top:118px">0.0%</div>
  <div class="prog" style="top:142px;height:10px;border-radius:5px;background:#afcdb1"></div>
  <div class="cap" style="left:24px;top:164px">Disponible: USD 1.754.500</div>
</div>
</div>
</body>
</html>
